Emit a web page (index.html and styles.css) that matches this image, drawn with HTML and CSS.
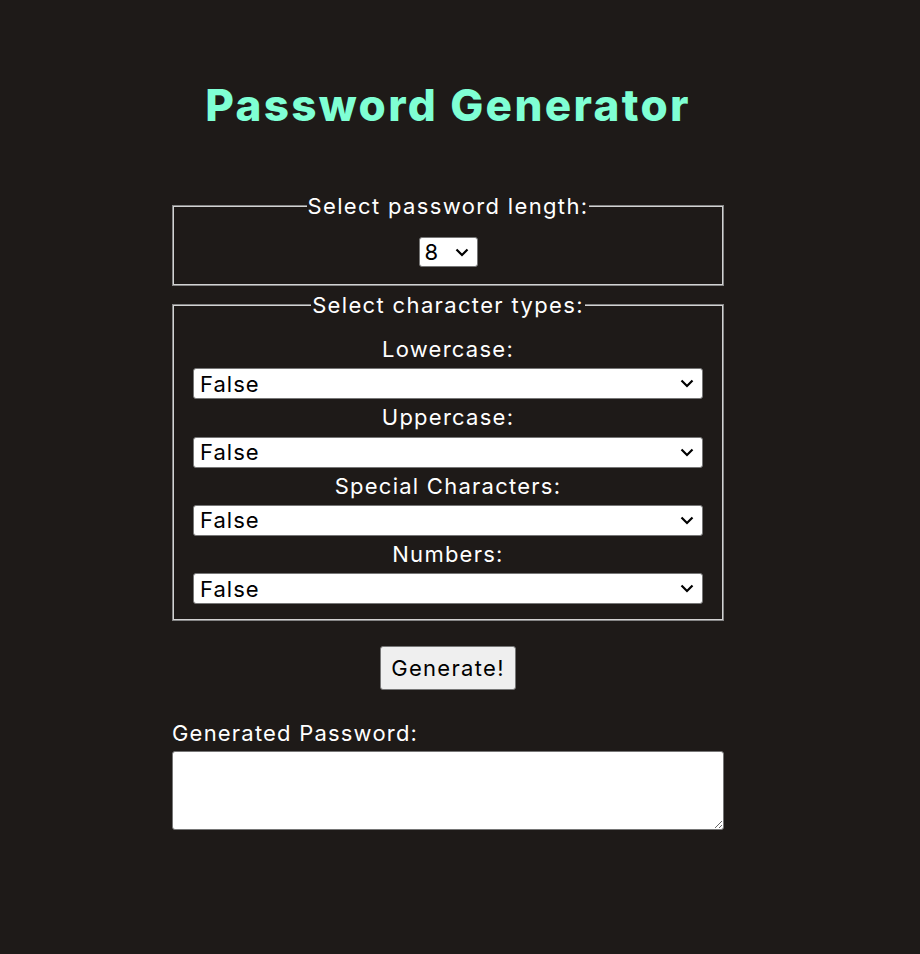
FILE: index.html
```html
<!DOCTYPE html>
<html>
<head>
<meta charset="utf-8">
<link rel="stylesheet" href="styles.css">
</head>
<body>
<div class="wrap">
  <h1 class="title">Password Generator</h1>
  <fieldset class="box box-length">
    <legend class="legend">Select password length:</legend>
    <select class="sel sel-len"><option>8</option></select>
  </fieldset>
  <fieldset class="box box-types">
    <legend class="legend">Select character types:</legend>
    <label class="lbl">Lowercase:</label>
    <select class="sel"><option>False</option></select>
    <label class="lbl">Uppercase:</label>
    <select class="sel"><option>False</option></select>
    <label class="lbl">Special Characters:</label>
    <select class="sel"><option>False</option></select>
    <label class="lbl">Numbers:</label>
    <select class="sel"><option>False</option></select>
  </fieldset>
  <div class="btn-row"><button class="btn">Generate!</button></div>
  <label class="out-lbl">Generated Password:</label>
  <textarea class="out"></textarea>
</div>
</body>
</html>
```
FILE: styles.css
```css
html, body {
  margin: 0;
  background: #1e1a18;
}
body {
  font-family: "Inter", "Open Sans", sans-serif;
  color: #ffffff;
}
.wrap {
  width: 552px;
  margin-left: 172px;
  padding-top: 78px;
  display: flex;
  flex-direction: column;
}
.title {
  margin: 0 0 62px;
  text-align: center;
  color: #7fffd4;
  font-size: 44px;
  font-weight: 800;
  line-height: 54px;
  letter-spacing: 2.35px;
}
.box {
  margin: 0;
  border: 2px solid #aaa;
  border-image: url("data:image/svg+xml;utf8,<svg xmlns='http://www.w3.org/2000/svg' width='6' height='6'><rect width='6' height='6' fill='%23858585'/><rect x='1' y='1' width='4' height='4' fill='%23d2d2d2'/><rect x='2' y='2' width='2' height='2' fill='%231e1a18'/></svg>") 2 stretch;
  padding: 0 19px;
  display: flex;
  flex-direction: column;
  align-items: stretch;
}
.legend {
  font-size: 22px;
  padding: 0 1px;
  margin: 0 auto;
  line-height: 24px;
  letter-spacing: 1.35px;
}
.box-length {
  align-items: center;
  padding-top: 19px;
  padding-bottom: 17px;
  margin-bottom: 7px;
}
.sel {
  -webkit-appearance: none;
  appearance: none;
  font-family: inherit;
  font-size: 22px;
  height: 31px;
  border: 1px solid #767676;
  border-radius: 3px;
  background-color: #fff;
  background-image: url("data:image/svg+xml;utf8,<svg xmlns='http://www.w3.org/2000/svg' width='14' height='9' viewBox='0 0 14 9'><path d='M1.5 1.5 L7 7 L12.5 1.5' fill='none' stroke='black' stroke-width='2.2'/></svg>");
  background-repeat: no-repeat;
  background-position: right 8px center;
  color: #000;
  padding: 0 0 0 6px;
  letter-spacing: 1px;
}
.sel-len {
  height: 30px;
  width: 59px;
  padding-left: 5px;
}
.box-types {
  padding-top: 14px;
  padding-bottom: 15px;
}
.lbl {
  text-align: center;
  font-size: 22px;
  line-height: 37.3px;
  letter-spacing: 1.25px;
}
.btn-row {
  display: flex;
  justify-content: center;
  margin-top: 25px;
}
.btn {
  font-family: inherit;
  font-size: 22px;
  height: 44px;
  width: 136px;
  background: #efefef;
  color: #000;
  border: 1px solid #767676;
  border-radius: 3px;
  letter-spacing: 1.3px;
}
.out-lbl {
  font-size: 22px;
  line-height: 28px;
  margin-top: 29px;
  letter-spacing: 1.2px;
}
.out {
  height: 79px;
  box-sizing: border-box;
  margin-top: 4px;
  border: 1px solid #767676;
  border-radius: 3px;
  background: #fff;
  font-family: inherit;
}
```
